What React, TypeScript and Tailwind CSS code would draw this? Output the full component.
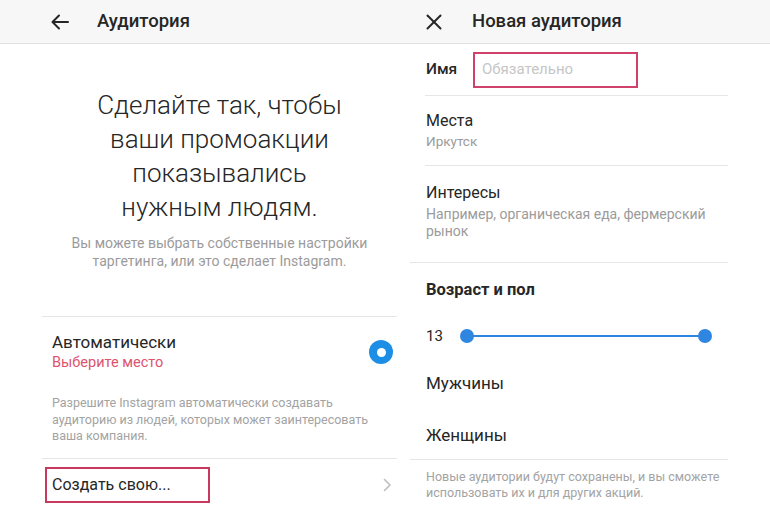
const BackArrow = () => (
  <svg width="18" height="16" viewBox="0 0 18 16" fill="none" stroke="#262626" strokeWidth="2" strokeLinecap="round" strokeLinejoin="round">
    <path d="M17 8H2" />
    <path d="M8 1.5L1.5 8L8 14.5" />
  </svg>
);

const CloseIcon = () => (
  <svg width="16" height="16" viewBox="0 0 16 16" fill="none" stroke="#262626" strokeWidth="2" strokeLinecap="round">
    <path d="M1.5 1.5L14.5 14.5" />
    <path d="M14.5 1.5L1.5 14.5" />
  </svg>
);

const Chevron = () => (
  <svg width="9" height="14" viewBox="0 0 9 14" fill="none" stroke="#bdbdbd" strokeWidth="1.6" strokeLinecap="round" strokeLinejoin="round">
    <path d="M1.5 1.5L7 7L1.5 12.5" />
  </svg>
);

const Header = ({ icon, title, iconPad, titlePad }: { icon: React.ReactNode; title: string; iconPad: string; titlePad: string }) => (
  <div className="flex h-[44px] shrink-0 items-center border-b border-[#e2e2e2] bg-[#f7f7f7]">
    <div className={`flex items-center ${iconPad}`}>{icon}</div>
    <span className={`text-[18.5px] font-medium text-[#262626] ${titlePad}`}>{title}</span>
  </div>
);

const AudienceScreen = () => (
  <div className="flex w-[400px] shrink-0 flex-col">
    <Header icon={<BackArrow />} title="Аудитория" iconPad="pl-[51px]" titlePad="ml-[28px]" />

    <div className="ml-[42px] w-[355px]">
      <div className="flex flex-col items-center pt-[44px] text-center">
        <h1 className="text-[26px] font-light leading-[34px] text-[#262626]">
          Сделайте так, чтобы
          <br />
          ваши промоакции
          <br />
          показывались
          <br />
          нужным людям.
        </h1>
        <p className="mt-[10px] text-[14px] leading-[18px] text-[#9b9b9b]">
          Вы можете выбрать собственные настройки
          <br />
          таргетинга, или это сделает Instagram.
        </p>
      </div>

      <div className="mt-[46px] h-px bg-[#e6e6e6]" />

      <div className="pl-[10px] pt-[14px] pb-[13px]">
        <div className="flex items-center justify-between">
          <div>
            <div className="text-[17px] leading-[22px] text-[#262626]">Автоматически</div>
            <div className="text-[14.5px] leading-[20px] text-[#dc5470]">Выберите место</div>
          </div>
          <div className="mr-[4px] flex h-[24px] w-[24px] items-center justify-center rounded-full bg-[#1d8ee6]">
            <div className="h-[9px] w-[9px] rounded-full bg-white" />
          </div>
        </div>
        <p className="mt-[22px] text-[12.5px] leading-[16.5px] text-[#a3a3a3]">
          Разрешите Instagram автоматически создавать
          <br />
          аудиторию из людей, которых может заинтересовать
          <br />
          ваша компания.
        </p>
      </div>

      <div className="h-px bg-[#e6e6e6]" />

      <div className="flex items-center justify-between pt-[8px]">
        <div className="ml-[3px] flex h-[36px] w-[165px] items-center border-2 border-[#c9385e] pl-[5px]">
          <span className="text-[16px] text-[#262626]">Создать свою...</span>
        </div>
        <div className="mr-[5px] flex items-center">
          <Chevron />
        </div>
      </div>
    </div>
  </div>
);

const NewAudienceScreen = () => (
  <div className="flex flex-1 flex-col">
    <Header icon={<CloseIcon />} title="Новая аудитория" iconPad="pl-[26px]" titlePad="ml-[30px]" />

    <div className="ml-[25px] w-[303px] shrink-0">
      <div className="flex h-[52px] items-center border-b border-[#e6e6e6] pl-[1px]">
        <span className="w-[47px] text-[15.5px] font-medium text-[#262626]">Имя</span>
        <div className="flex h-[36px] w-[165px] items-center border-2 border-[#d0416b] pl-[7px]">
          <span className="text-[15px] text-[#c6c6c6]">Обязательно</span>
        </div>
      </div>

      <div className="h-[70px] border-b border-[#e6e6e6] pl-[1px] pt-[15px]">
        <div className="text-[16px] leading-[20px] text-[#262626]">Места</div>
        <div className="text-[13.5px] leading-[20px] text-[#9b9b9b]">Иркутск</div>
      </div>

      <div className="h-[96px] pl-[1px] pt-[17px]">
        <div className="text-[16px] leading-[20px] text-[#262626]">Интересы</div>
        <div className="mt-[3px] text-[14px] leading-[17px] text-[#9b9b9b]">
          Например, органическая еда, фермерский
          <br />
          рынок
        </div>
      </div>
    </div>

    <div className="ml-[10px] h-px w-[318px] shrink-0 bg-[#e6e6e6]" />

    <div className="ml-[25px] w-[303px] shrink-0 pl-[1px]">
      <div className="pt-[17px] text-[16.5px] font-bold leading-[20px] text-[#262626]">Возраст и пол</div>

      <div className="mt-[26px] flex items-center">
        <span className="w-[34px] text-[15px] leading-[20px] text-[#262626]">13</span>
        <div className="relative flex h-[14px] w-[252px] items-center">
          <div className="mx-[7px] h-[2px] flex-1 bg-[#2f86e0]" />
          <div className="absolute left-0 h-[14px] w-[14px] rounded-full bg-[#2f86e0]" />
          <div className="absolute right-0 h-[14px] w-[14px] rounded-full bg-[#2f86e0]" />
        </div>
      </div>

      <div className="mt-[25px] text-[17px] leading-[24px] text-[#262626]">Мужчины</div>
      <div className="mt-[28px] text-[17px] leading-[24px] text-[#262626]">Женщины</div>
    </div>

    <div className="ml-[10px] mt-[12px] h-px w-[318px] shrink-0 bg-[#e6e6e6]" />

    <p className="ml-[26px] mt-[9px] shrink-0 text-[12.5px] leading-[15.5px] text-[#a3a3a3]">
      Новые аудитории будут сохранены, и вы сможете
      <br />
      использовать их и для других акций.
    </p>
  </div>
);

export default function App() {
  return (
    <div className="flex h-[512px] w-[770px] overflow-hidden bg-white font-['Roboto','Noto_Sans',sans-serif]">
      <AudienceScreen />
      <NewAudienceScreen />
    </div>
  );
}
